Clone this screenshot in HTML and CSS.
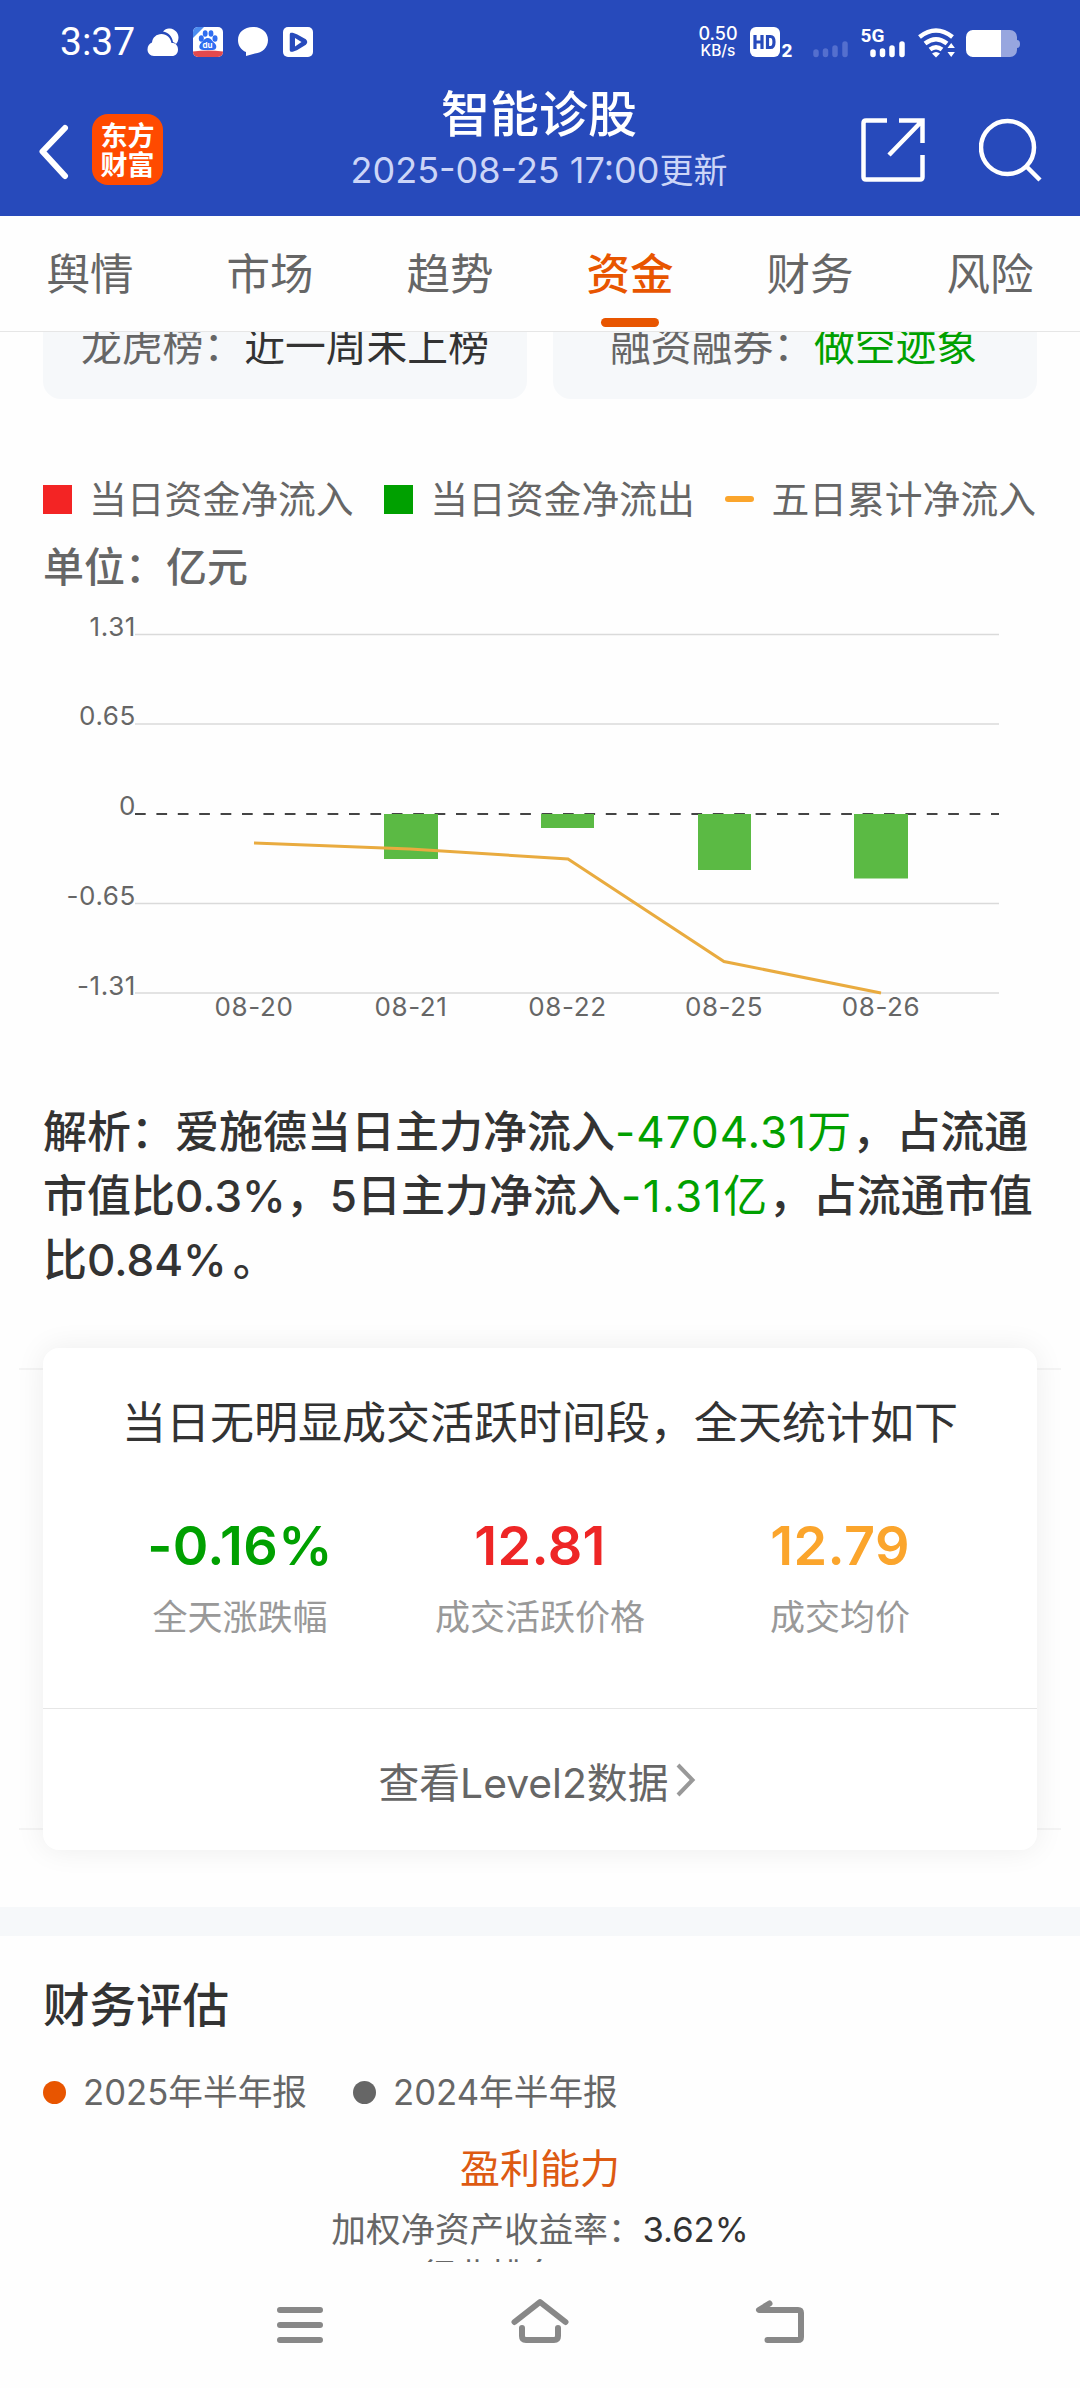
FILE: index.html
```html
<!DOCTYPE html>
<html lang="zh-CN">
<head>
  <meta charset="UTF-8">
  <meta name="viewport" content="width=device-width, initial-scale=1.0">
  <title>智能诊股</title>
  <link rel="stylesheet" href="styles.css">
</head>
<body>

  <!-- 顶部：状态栏 + 标题栏 -->
  <div class="top">
    <div class="status">
      <span class="clock">3:37</span>
      <svg class="status-left" width="166" height="32" viewBox="147 26 166 32">
        <!-- 天气 -->
        <path fill="#fff" d="M154 56c-4 0-6.500-3-6.500-6.500 0-3.500 2-6 4.500-7 .5-5 4.500-8.500 9.500-8.500 5.200 0 9 3.500 10 9h1.500c3 .5 5 3 5 6.500 0 4-2.500 6.500-6 6.500z"/>
        <path fill="#fff" d="M163 31.500c2-2.500 4.500-3.500 7-3 5 .5 8.500 4.500 8.500 9 0 2.500-1 5-2.500 6.500-.8-1-1.800-1.500-3-2-.8-5.500-4.500-9.500-10-10.500z"/>
        <!-- 百度 -->
        <rect x="193" y="27" width="30" height="30" rx="5" fill="#fff"/>
        <path fill="#4b8cf0" d="M198 27h6l-11 11v-6a5 5 0 0 1 5-5z"/>
        <path fill="#e2494d" d="M193 51.500c10-1.500 20-1.500 30 0v.5a5 5 0 0 1-5 5h-20a5 5 0 0 1-5-5z"/>
        <g fill="#2f6df0">
          <ellipse cx="201.300" cy="38.500" rx="2.500" ry="3.200"/>
          <ellipse cx="205.200" cy="33.500" rx="2.400" ry="3.200"/>
          <ellipse cx="211" cy="33.500" rx="2.400" ry="3.200"/>
          <ellipse cx="215" cy="38.500" rx="2.500" ry="3.200"/>
          <path d="M208 38c3 0 4 3 6.500 5s3 7-2 7h-9c-5 0-5-4.500-2.500-7s3.500-5 7-5z"/>
        </g>
        <text x="202.500" y="48" class="du">du</text>
        <!-- 消息 -->
        <path fill="#fff" d="M253 27c9 0 15 5.500 15 13s-6 13-13 13.500L246 56v-4c-5-2-8-6.500-8-12 0-7.500 6-13 15-13z"/>
        <!-- 视频 -->
        <rect x="283" y="27" width="30" height="30" rx="5" fill="#fff"/>
        <path d="M290.500 34.500q0-1.500 2-1l4 1.500 9 5q2 2 0 4l-9 5.500-4 1.500q-2 .5-2-1z" fill="#274abb" stroke="#274abb" stroke-width="1.500" stroke-linejoin="round"/>
        <path d="M295 38l6.500 4-6.500 4.500z" fill="#fff"/>
      </svg>
      <div class="speed"><b>0.50</b><i>KB/s</i></div>
      <svg class="status-right" width="272" height="32" viewBox="749 26 272 32">
        <rect x="750" y="27" width="30" height="30" rx="6" fill="#fff"/>
        <path d="M755 35v14M762 35v14M755 42h7M767.500 36.500h3q3.500 0 3.500 5.500t-3.500 5.500h-3z" fill="none" stroke="#274abb" stroke-width="3.200"/>
        <text x="781.500" y="56.500" class="sim">2</text>
        <path d="M816 52v2.500M825.500 51v3.500M835 48v6.500M845 44v10.500" stroke="#546fce" stroke-width="5.500" stroke-linecap="round"/>
        <text x="860.500" y="41.500" class="net">5G</text>
        <path d="M873 52v2.500M882.500 51v3.500M892 48v6.500M902 44v10.500" stroke="#fff" stroke-width="5.500" stroke-linecap="round"/>
        <g fill="none" stroke="#fff" stroke-width="4.500">
          <path d="M919.500 37q16.500-13 33 0"/>
          <path d="M925 43.500q11-8.500 22 0"/>
          <path d="M930 49.500q6-4.500 12 0"/>
        </g>
        <path fill="#fff" d="M932 53.500q4-3 8 0l-4 4zM947.500 48l3.700-5 3.700 5zM947.500 52h7.400l-3.700 5z"/>
        <path fill="#97a6df" d="M972 30h38a7 7 0 0 1 7 7v3q3 0 3 4t-3 4v2a7 7 0 0 1-7 7h-38z"/>
        <path fill="#fff" d="M973 30h28v27h-28a7 7 0 0 1-7-7v-13a7 7 0 0 1 7-7z"/>
      </svg>
    </div>

    <div class="bar">
      <svg class="back" width="32" height="56" viewBox="0 0 32 56"><path d="M27 4L4.500 27.500 27 52" fill="none" stroke="#fff" stroke-width="6" stroke-linecap="round" stroke-linejoin="round"/></svg>
      <div class="app-logo">东方<br>财富</div>
      <div class="title">
        <h1>智能诊股</h1>
        <p>2025-08-25 17:00<span>更新</span></p>
      </div>
      <svg class="share" width="64" height="64" viewBox="0 0 64 64"><path d="M26 2.500H5q-2.500 0-2.500 2.500v54q0 2.500 2.500 2.500h54q2.500 0 2.500-2.500V37M38 2.500h23.500V25M61 3L28 37" fill="none" stroke="#fff" stroke-width="4.500"/></svg>
      <svg class="search" width="64" height="64" viewBox="0 0 64 64"><circle cx="28.500" cy="29.500" r="26.500" fill="none" stroke="#fff" stroke-width="4.500"/><path d="M47 48l14 14" stroke="#fff" stroke-width="4.500"/></svg>
    </div>
  </div>

  <!-- 分类标签 -->
  <div class="tabs">
    <div class="tab">舆情</div>
    <div class="tab">市场</div>
    <div class="tab">趋势</div>
    <div class="tab active">资金</div>
    <div class="tab">财务</div>
    <div class="tab">风险</div>
  </div>

  <div class="content">
    <div class="pills">
      <div class="pill">龙虎榜：<span>近一周未上榜</span></div>
      <div class="pill margin">融资融券：<span class="green">做空迹象</span></div>
    </div>

    <!-- 资金流向图 -->
    <div class="legend">
      <div class="key"><i class="in"></i>当日资金净流入</div>
      <div class="key"><i class="out"></i>当日资金净流出</div>
      <div class="key"><i class="five"></i>五日累计净流入</div>
    </div>
    <div class="unit">单位：亿元</div>
    <svg class="chart" width="1080" height="430" viewBox="0 600 1080 430">
      <path d="M135 634.500H999M135 724H999M135 903.500H999M135 993H999" stroke="#dadada" stroke-width="1.500"/>
      <path d="M135 814H999" stroke="#444" stroke-width="1.800" stroke-dasharray="10.700 10.700"/>
      <g fill="#5bba44">
        <rect x="384" y="814" width="54" height="45"/>
        <rect x="541" y="814" width="53" height="14"/>
        <rect x="698" y="814" width="53" height="56"/>
        <rect x="854" y="814" width="54" height="64.500"/>
      </g>
      <polyline points="254,843 410,849 568,859 724,961.500 881,993" fill="none" stroke="#e9ab3f" stroke-width="3"/>
      <g class="y-axis">
        <text x="136" y="635.500">1.31</text>
        <text x="136" y="725">0.65</text>
        <text x="136" y="815">0</text>
        <text x="136" y="905">-0.65</text>
        <text x="136" y="994.500">-1.31</text>
      </g>
      <g class="x-axis">
        <text x="254" y="1016">08-20</text>
        <text x="411" y="1016">08-21</text>
        <text x="567.500" y="1016">08-22</text>
        <text x="724" y="1016">08-25</text>
        <text x="881" y="1016">08-26</text>
      </g>
    </svg>

    <p class="analysis">解析：爱施德当日主力净流入<span>-4704.31万</span>，占流通<br>市值比0.3%，5日主力净流入<span class="short">-1.31亿</span>，占流通市值<br>比0.84<em>%</em>。</p>

    <!-- 成交统计卡片 -->
    <div class="card">
      <div class="card-title">当日无明显成交活跃时间段，全天统计如下</div>
      <div class="stats">
        <div class="stat"><b class="c-green">-0.16%</b><span>全天涨跌幅</span></div>
        <div class="stat"><b class="c-red">12.81</b><span>成交活跃价格</span></div>
        <div class="stat"><b class="c-orange">12.79</b><span>成交均价</span></div>
      </div>
      <div class="more">查看Level2数据<svg width="20" height="34" viewBox="0 0 20 34"><path d="M2 2l14.500 15L2 32" fill="none" stroke="#999" stroke-width="4"/></svg></div>
    </div>
  </div>

  <!-- 财务评估 -->
  <div class="finance">
    <h2>财务评估</h2>
    <div class="reports">
      <div class="report"><i></i>2025年半年报</div>
      <div class="report last"><i></i>2024年半年报</div>
    </div>
    <h3>盈利能力</h3>
    <div class="row">加权净资产收益率：<b>3.62%</b></div>
    <div class="row rank">行业排名：</div>
  </div>

  <!-- 系统导航 -->
  <div class="nav">
    <svg width="560" height="80" viewBox="260 2285 560 80" fill="none" stroke="#888" stroke-width="6" stroke-linecap="round" stroke-linejoin="round">
      <path d="M280 2310h40M280 2325h40M280 2340h40"/>
      <path d="M514.500 2322l25.500-20 25.500 20M522 2328v8q0 4 4 4h28q4 0 4-4v-8"/>
      <path d="M769.500 2303.500l-10.500 6.500h39q3 0 3 3v24q0 3-3 3h-30.500"/>
    </svg>
  </div>

</body>
</html>
```

FILE: styles.css
```css
html, body {
  margin: 0;
  padding: 0;
}
body {
  width: 1080px;
  height: 2388px;
  overflow: hidden;
  display: flex;
  flex-direction: column;
  background: #fefefe;
  font-family: Inter, "Noto Sans CJK SC", sans-serif;
  color: #666;
}
h1, h2, h3, p {
  margin: 0;
  font-weight: 400;
}
i, em {
  font-style: normal;
}

/* 顶部 */
.top {
  height: 216px;
  flex: none;
  background: #274abb;
  color: #fff;
}
.status {
  height: 84px;
  display: flex;
  align-items: center;
}
.clock {
  width: 87px;
  margin-left: 60px;
  font: 39px/86px Roboto, sans-serif;
}
.speed {
  width: 40px;
  margin-left: 385px;
  text-align: center;
  font-family: Inter, sans-serif;
}
.speed b {
  display: block;
  font-size: 18px;
  font-weight: 500;
  line-height: 16px;
}
.speed i {
  display: block;
  font-size: 15.500px;
  font-weight: 500;
  line-height: 17px;
}
.status-right {
  margin-left: 11px;
}
.du {
  font: bold 8px Inter, sans-serif;
  fill: #fff;
}
.sim {
  font: 800 17px Inter, sans-serif;
  fill: #fff;
}
.net {
  font: bold 19px Roboto, sans-serif;
  fill: #fff;
}
.bar {
  height: 132px;
  display: flex;
}
.back {
  margin: 40px 0 0 38px;
}
.app-logo {
  width: 71px;
  height: 63px;
  margin: 30px 0 0 22px;
  padding-top: 8px;
  border-radius: 16px;
  background: #ff4a00;
  font-size: 27px;
  font-weight: 700;
  line-height: 29px;
  text-align: center;
}
.title {
  width: 400px;
  margin-left: 176px;
  text-align: center;
}
.title h1 {
  height: 61px;
  font-size: 49px;
  font-weight: 500;
  line-height: 62px;
}
.title p {
  height: 50px;
  font-size: 36px;
  line-height: 50px;
  color: #ccd5f7;
}
.title p span {
  font-size: 34px;
}
.share {
  margin: 34px 0 0 122px;
}
.search {
  margin: 34px 0 0 54px;
}

/* 标签栏 */
.tabs {
  height: 115px;
  flex: none;
  display: flex;
  border-bottom: 1px solid #e6e6e6;
}
.tab {
  width: 180px;
  font-size: 43.500px;
  line-height: 116px;
  text-align: center;
}
.active {
  position: relative;
  color: #e85500;
  font-weight: 500;
}
.active::after {
  content: "";
  position: absolute;
  left: 61px;
  bottom: 4px;
  width: 58px;
  height: 9px;
  border-radius: 5px;
  background: #e85500;
}

/* 资金 */
.content {
  height: 1575px;
  flex: none;
}
.pills {
  height: 67px;
  display: flex;
  gap: 26px;
  padding: 0 43px;
  overflow: hidden;
}
.pill {
  width: 446px;
  height: 67px;
  padding-left: 38px;
  border-radius: 0 0 18px 18px;
  background: #f6f8fa;
  font-size: 40.800px;
  line-height: 28px;
  white-space: nowrap;
}
.pill.margin {
  width: 427px;
  padding-left: 57px;
}
.pill span {
  color: #333;
}
.pill .green {
  color: #00a000;
}
.legend {
  display: flex;
  justify-content: space-between;
  height: 60px;
  margin: 70px 44px 0 43px;
  font-size: 37.800px;
  line-height: 60px;
}
.key {
  display: flex;
  align-items: center;
}
.key i {
  width: 29px;
  height: 29px;
  margin-right: 17px;
}
.key .in {
  background: #f32424;
}
.key .out {
  background: #00a000;
}
.key .five {
  height: 6px;
  border-radius: 3px;
  background: #fba52c;
}
.unit {
  height: 70px;
  margin-left: 43px;
  font-size: 41px;
  font-weight: 500;
  line-height: 76px;
}
.chart {
  display: block;
  margin-top: 1px;
}
.chart text {
  font: 26px Inter, sans-serif;
  letter-spacing: .6px;
  fill: #666;
}
.y-axis {
  text-anchor: end;
}
.x-axis {
  text-anchor: middle;
}
.analysis {
  height: 192px;
  margin: 70px 0 0 43px;
  font-size: 44px;
  font-weight: 500;
  line-height: 64px;
  color: #333;
  white-space: nowrap;
}
.analysis span {
  color: #00a000;
  font-weight: 400;
  letter-spacing: 1px;
}
.analysis .short {
  letter-spacing: 1.500px;
}
.analysis em {
  margin-right: 6px;
}
.card {
  position: relative;
  height: 502px;
  margin: 56px 43px 0;
  border-radius: 16px;
  background: #fff;
  box-shadow: 0 0 30px rgba(0, 0, 0, 0.07);
}
/* 卡片两侧的细线 */
.card::before {
  content: "";
  position: absolute;
  z-index: -1;
  top: 20px;
  bottom: 20px;
  left: -24px;
  right: -24px;
  border-top: 2px solid #f4f4f4;
  border-bottom: 2px solid #f4f4f4;
}
.card-title {
  height: 150px;
  font-size: 44px;
  line-height: 151px;
  text-align: center;
  color: #333;
}
.stats {
  height: 210px;
  display: flex;
  justify-content: center;
  border-bottom: 1px solid #e6e6e6;
}
.stat {
  width: 300px;
  text-align: center;
}
.stat b {
  display: block;
  height: 92px;
  font-size: 54px;
  font-weight: 600;
  line-height: 96px;
  letter-spacing: .4px;
}
.stat span {
  display: block;
  font-size: 35px;
  line-height: 54px;
  color: #999;
}
.c-green {
  color: #00a000;
}
.c-red {
  color: #ee2626;
}
.c-orange {
  color: #fba52c;
}
.more {
  height: 142px;
  display: flex;
  align-items: center;
  justify-content: center;
  padding-right: 5px;
  font-size: 40.800px;
}
.more svg {
  margin-left: 8px;
}

/* 财务评估 */
.finance {
  height: 326px;
  flex: none;
  overflow: hidden;
  border-top: 29px solid #f6f8fa;
}
.finance h2 {
  height: 136px;
  margin-left: 43px;
  font-size: 46.500px;
  font-weight: 500;
  line-height: 138px;
  color: #333;
}
.reports {
  display: flex;
  height: 40px;
  margin-left: 43px;
  font-size: 34.700px;
  line-height: 40px;
}
.report {
  display: flex;
  align-items: center;
  width: 310px;
}
.report i {
  width: 23px;
  height: 23px;
  margin-right: 17px;
  border-radius: 50%;
  background: #e85500;
}
.report.last i {
  background: #666;
}
.finance h3 {
  height: 77px;
  margin-top: 17px;
  font-size: 40px;
  line-height: 80px;
  text-align: center;
  color: #dd5a12;
}
.row {
  height: 46px;
  font-size: 34.600px;
  line-height: 46px;
  text-align: center;
}
.row b {
  font-weight: 400;
  color: #333;
}
.row.rank {
  padding-left: 421px;
  text-align: left;
}

/* 底部导航 */
.nav {
  height: 126px;
  flex: none;
  background: #fefefe;
}
.nav svg {
  display: block;
  margin: 23px 0 0 260px;
}
```
